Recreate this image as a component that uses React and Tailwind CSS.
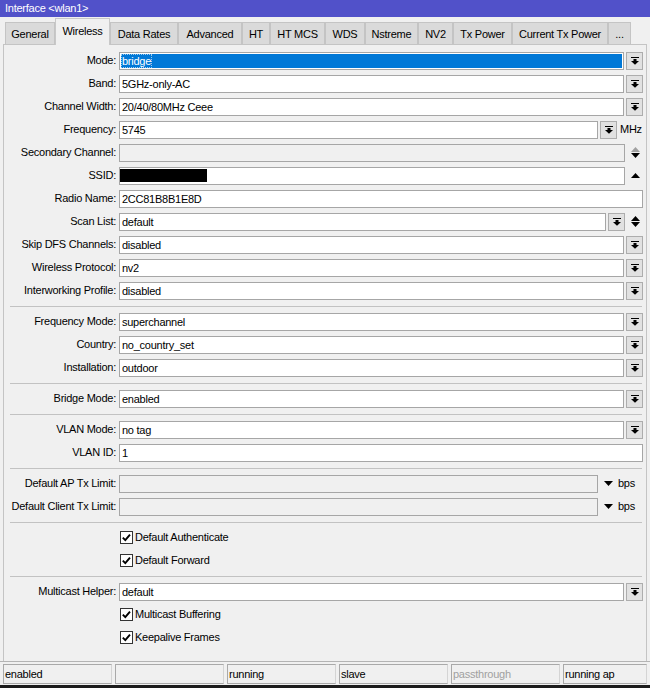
import React from 'react';

const tabs = [
  ['General', 50],
  ['Wireless', 55],
  ['Data Rates', 68],
  ['Advanced', 64],
  ['HT', 28],
  ['HT MCS', 55],
  ['WDS', 40],
  ['Nstreme', 53],
  ['NV2', 35],
  ['Tx Power', 59],
  ['Current Tx Power', 96],
  ['...', 23],
];

const tabW = {
  50: 'w-[50px]', 55: 'w-[55px]', 68: 'w-[68px]', 64: 'w-[64px]', 28: 'w-[28px]',
  40: 'w-[40px]', 53: 'w-[53px]', 35: 'w-[35px]', 59: 'w-[59px]', 96: 'w-[96px]', 23: 'w-[23px]',
};

const DropIcon = () => (
  <svg width="8" height="8" viewBox="0 0 8 8">
    <rect x="0" y="0" width="8" height="1" fill="#000" />
    <rect x="2.5" y="2" width="3" height="2" fill="#000" />
    <path d="M0 4h8L4 7.8z" fill="#000" />
  </svg>
);

const UpDown = ({ dim }) => (
  <svg width="9" height="11" viewBox="0 0 9 11">
    <path d="M4.5 0L9 5H0z" fill={dim ? '#a0a0a0' : '#000'} />
    <path d="M0 6h9L4.5 11z" fill="#000" />
  </svg>
);

const Up = () => (
  <svg width="9" height="5" viewBox="0 0 9 5">
    <path d="M4.5 0L9 5H0z" fill="#000" />
  </svg>
);

const Down = () => (
  <svg width="9" height="5" viewBox="0 0 9 5">
    <path d="M0 0h9L4.5 5z" fill="#000" />
  </svg>
);

const Label = ({ children }) => (
  <div className="w-[112px] shrink-0 text-right whitespace-nowrap">{children}</div>
);

const Field = ({ children, disabled }) => (
  <div
    className={`h-[18px] min-w-0 flex-1 overflow-hidden whitespace-nowrap border border-[#a6a6a6] pl-[2px] leading-[16px] ${
      disabled ? 'bg-[#f0f0f0]' : 'bg-white'
    }`}
  >
    {children}
  </div>
);

const DropBtn = () => (
  <div className="ml-[2px] flex h-[18px] w-[17px] shrink-0 items-center justify-center border border-[#adadad] bg-[#e1e1e1]">
    <DropIcon />
  </div>
);

const Row = ({ label, children }) => (
  <div className="flex h-[23px] items-center pr-[3px]">
    <Label>{label}</Label>
    <div className="ml-[3px] flex min-w-0 flex-1 items-center">{children}</div>
  </div>
);

const Select = ({ label, value }) => (
  <Row label={label}>
    <Field>{value}</Field>
    <DropBtn />
  </Row>
);

const Check = ({ label }) => (
  <div className="flex h-[23px] items-center pl-[116px]">
    <div className="flex h-[13px] w-[13px] items-center justify-center border border-[#333] bg-white">
      <svg width="11" height="11" viewBox="0 0 11 11">
        <path d="M1.8 5.6L4.3 8.2L9 2.6" fill="none" stroke="#000" strokeWidth="1.9" />
      </svg>
    </div>
    <span className="ml-[2px]">{label}</span>
  </div>
);

const Sep = () => (
  <div className="flex h-[8px] items-center pl-[6px] pr-[4px]">
    <div className="h-px w-full bg-[#c2c2c2]" />
  </div>
);

const statuses = ['enabled', '', 'running', 'slave', 'passthrough', 'running ap'];

export default function App() {
  return (
    <div className="flex h-[688px] w-[650px] flex-col overflow-hidden bg-[#f0f0f0] font-['Liberation_Sans',Arial,sans-serif] text-[11px] tracking-[-0.25px] text-black">
      <div className="h-[17px] shrink-0 bg-[#5151c9] pl-[5px] leading-[17px] text-white">
        {'Interface <wlan1>'}
      </div>

      <div className="flex h-[27px] shrink-0 items-end pl-[5px]">
        {tabs.map(([name, w]) =>
          name === 'Wireless' ? (
            <div
              key={name}
              className={`${tabW[w]} relative z-10 -mb-px flex h-[27px] items-center justify-center border-x border-t border-[#c8c8c8] bg-[#f0f0f0] pb-[1px]`}
            >
              {name}
            </div>
          ) : (
            <div
              key={name}
              className={`${tabW[w]} flex h-[22px] items-center justify-center border-x border-t border-[#c4c4c4] bg-[#dadada] pt-px`}
            >
              {name}
            </div>
          )
        )}
      </div>

      <div className="mx-[3px] flex-1 border-x border-t border-[#c4c4c4] pt-[4px]">
        <Row label="Mode:">
          <div className="h-[18px] flex-1 border border-[#a6a6a6] bg-white p-px">
            <div className="h-full bg-[#0078d7] pl-px leading-[14px] text-white">
              <span className="outline-1 outline-dotted outline-white/60">bridge</span>
            </div>
          </div>
          <DropBtn />
        </Row>
        <Select label="Band:" value="5GHz-only-AC" />
        <Select label="Channel Width:" value="20/40/80MHz Ceee" />
        <Row label="Frequency:">
          <Field>5745</Field>
          <DropBtn />
          <span className="w-[26px] shrink-0 pl-[3px]">MHz</span>
        </Row>
        <Row label="Secondary Channel:">
          <Field disabled />
          <div className="flex w-[18px] shrink-0 justify-center pl-[2px]">
            <UpDown dim />
          </div>
        </Row>
        <Row label="SSID:">
          <div className="h-[18px] flex-1 border border-[#a6a6a6] bg-white pt-px">
            <div className="h-[13px] w-[87px] bg-black" />
          </div>
          <div className="flex w-[18px] shrink-0 justify-center pl-[2px]">
            <Up />
          </div>
        </Row>
        <Row label="Radio Name:">
          <Field>2CC81B8B1E8D</Field>
        </Row>
        <Row label="Scan List:">
          <Field>default</Field>
          <DropBtn />
          <div className="flex w-[18px] shrink-0 justify-center pl-[2px]">
            <UpDown />
          </div>
        </Row>
        <Select label="Skip DFS Channels:" value="disabled" />
        <Select label="Wireless Protocol:" value="nv2" />
        <Select label="Interworking Profile:" value="disabled" />
        <Sep />
        <Select label="Frequency Mode:" value="superchannel" />
        <Select label="Country:" value="no_country_set" />
        <Select label="Installation:" value="outdoor" />
        <Sep />
        <Select label="Bridge Mode:" value="enabled" />
        <Sep />
        <Select label="VLAN Mode:" value="no tag" />
        <Row label="VLAN ID:">
          <Field>1</Field>
        </Row>
        <Sep />
        <Row label="Default AP Tx Limit:">
          <Field disabled />
          <div className="flex w-[45px] shrink-0 items-center">
            <div className="ml-[6px] flex w-[9px]">
              <Down />
            </div>
            <span className="ml-[5px]">bps</span>
          </div>
        </Row>
        <Row label="Default Client Tx Limit:">
          <Field disabled />
          <div className="flex w-[45px] shrink-0 items-center">
            <div className="ml-[6px] flex w-[9px]">
              <Down />
            </div>
            <span className="ml-[5px]">bps</span>
          </div>
        </Row>
        <Sep />
        <Check label="Default Authenticate" />
        <Check label="Default Forward" />
        <Sep />
        <Select label="Multicast Helper:" value="default" />
        <Check label="Multicast Buffering" />
        <Check label="Keepalive Frames" />
      </div>

      <div className="flex h-[27px] shrink-0 flex-col border-t border-[#b4b4b4]">
        <div className="flex flex-1 gap-[3px] px-[3px] pt-[2px]">
          {statuses.map((s, i) => (
            <div
              key={i}
              className={`${i === 5 ? 'flex-1' : 'w-[109px]'} h-[20px] border border-[#a9a9a9] border-r-[#d4d4d4] pl-px leading-[18px] ${
                s === 'passthrough' ? 'text-[#a0a0a0]' : ''
              }`}
            >
              {s}
            </div>
          ))}
        </div>
        <div className="h-[3px] bg-[#1c1c1c]" />
      </div>
    </div>
  );
}
